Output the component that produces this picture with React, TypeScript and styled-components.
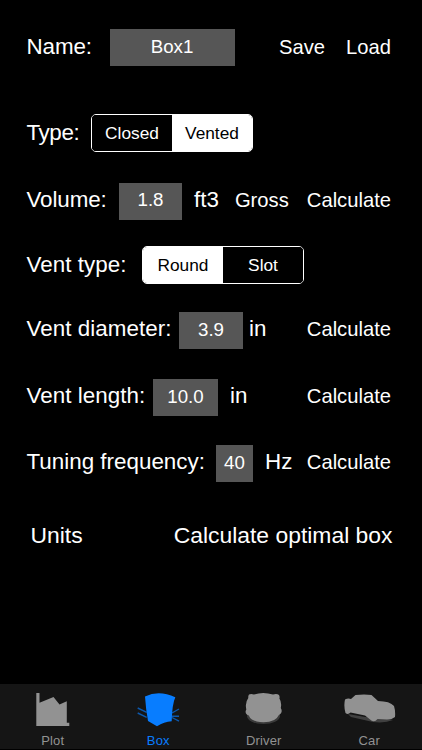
import React, { useState } from "react";
import styled, { createGlobalStyle } from "styled-components";

const GlobalStyle = createGlobalStyle`
  html, body { margin: 0; padding: 0; background: #000; }
  * { box-sizing: border-box; }
`;

const Screen = styled.div`
  width: 422px;
  height: 750px;
  display: flex;
  flex-direction: column;
  background: #000;
  color: #fff;
  font-family: "Liberation Sans", Arial, sans-serif;
  overflow: hidden;
`;

const Form = styled.main`
  flex: 1;
  display: flex;
  flex-direction: column;
  padding: 28px 31px 0 26.5px;
`;

const Row = styled.div<{ $gap: number }>`
  display: flex;
  align-items: center;
  height: 38px;
  margin-bottom: ${(p) => p.$gap}px;
  white-space: nowrap;
`;

const Label = styled.span<{ $width: number; $lift?: number; $track?: number }>`
  width: ${(p) => p.$width}px;
  flex: none;
  font-size: 22.4px;
  line-height: 26px;
  letter-spacing: ${(p) => p.$track ?? 0}px;
  padding-bottom: ${(p) => p.$lift ?? 3}px;
`;

const Field = styled.input<{ $width: number; $lift?: number }>`
  width: ${(p) => p.$width}px;
  height: 37px;
  flex: none;
  border: 0;
  border-radius: 0;
  outline: 0;
  padding: 0 0 ${(p) => p.$lift ?? 1}px;
  background: #565656;
  color: #fff;
  font: 18.7px "Liberation Sans", Arial, sans-serif;
  text-align: center;
`;

const Unit = styled.span<{ $gap: number }>`
  margin-left: ${(p) => p.$gap}px;
  font-size: 22.4px;
  line-height: 26px;
  padding-bottom: 3px;
`;

const Action = styled.button<{ $gap?: number; $size?: number; $lift?: number }>`
  margin: 0 0 0 ${(p) => (p.$gap === undefined ? "auto" : `${p.$gap}px`)};
  border: 0;
  padding: 0 0 ${(p) => p.$lift ?? 2}px;
  background: none;
  color: #fff;
  font-family: inherit;
  font-size: ${(p) => p.$size ?? 20.2}px;
  line-height: 26px;
`;

const WideAction = styled(Action)`
  margin-right: -1.5px;
`;

const Segments = styled.div`
  display: flex;
  width: 162px;
  height: 38px;
  border: 1px solid #fff;
  border-radius: 5px;
  overflow: hidden;
`;

const Segment = styled.button<{ $on: boolean }>`
  flex: 1;
  border: 0;
  padding: 0;
  background: ${(p) => (p.$on ? "#fff" : "#000")};
  color: ${(p) => (p.$on ? "#000" : "#fff")};
  font-family: inherit;
  font-size: 17.3px;
`;

const TabBar = styled.nav`
  height: 66px;
  flex: none;
  display: grid;
  grid-template-columns: repeat(4, 1fr);
  background: #151515;
  border-bottom: 1px solid #000;
`;

const Tab = styled.button<{ $on: boolean }>`
  display: flex;
  flex-direction: column;
  align-items: center;
  border: 0;
  padding: 4px 0 0;
  background: none;
  color: ${(p) => (p.$on ? "#087dff" : "#929292")};
  font-family: inherit;
  font-size: 13px;
  line-height: 17px;
  letter-spacing: 0.15px;
`;

const TabIcon = styled.svg`
  display: block;
  flex: none;
  width: 60px;
  height: 44px;
  fill: currentColor;
  stroke: none;
`;

const SoftShape = styled.g`
  filter: blur(0.5px);
`;

const PlotIcon = () => (
  <TabIcon viewBox="0 0 60 44">
    <path d="M13.3 5h3.2v9.7L30.5 9l6 7.5 7.3-3.2v21.4h2.5V38h-33z" />
  </TabIcon>
);

const BoxIcon = () => (
  <TabIcon viewBox="0 0 60 44">
    <path d="M17 8.5Q31 1.5 47.3 9.3 44.2 16 43.7 33.2 36 33.8 29 38.2L20 33Q17.8 21 17 8.5z" />
    <path
      d="M9.7 20l9 4.3M9.7 25l9 4.3M44 25l7-4M44 28.2h7M44 29.5l7 3.6"
      fill="none"
      stroke="currentColor"
      strokeWidth="1.4"
      opacity="0.65"
    />
  </TabIcon>
);

const DriverIcon = () => (
  <TabIcon viewBox="0 0 60 44">
    <SoftShape>
      <ellipse cx="29.5" cy="28" rx="16.5" ry="8" opacity="0.3" />
      <path d="M15 6.5q2-1 5 0 9-3 19 0 4-1 6 .5 1 2 .4 3.5 2.6 4 1.4 9.5 1.8 3 0 5.5-1.3 1-2.3 2Q42 34 29.5 34.3 17 34 14.8 27.5q-2-.5-2.8-2-1-2 .3-4-1.5-7 2-11.5Q14 8 15 6.5z" />
    </SoftShape>
  </TabIcon>
);

const CarIcon = () => (
  <TabIcon viewBox="0 0 60 44">
    <SoftShape>
      <path d="M9 26l17 3 24 2 4 1q-8 3.5-20 2L12 29z" opacity="0.35" />
      <path d="M6 11.5Q9 10 12 11l4.500-4q9-1 16 0l6.500 6q12 .2 16 5 1.600 5 1 11-3 2.500-8 2.500l-9.500-.5q-3.500 4.500-8 0L26 27.500 11.500 24.500Q9 27 6.500 25 4.500 18 6 11.500z" />
    </SoftShape>
  </TabIcon>
);

const tabs = [
  { name: "Plot", Icon: PlotIcon },
  { name: "Box", Icon: BoxIcon },
  { name: "Driver", Icon: DriverIcon },
  { name: "Car", Icon: CarIcon },
];

function Choice({ options, initial }: { options: string[]; initial: string }) {
  const [value, setValue] = useState(initial);
  return (
    <Segments>
      {options.map((o) => (
        <Segment key={o} $on={o === value} onClick={() => setValue(o)}>
          {o}
        </Segment>
      ))}
    </Segments>
  );
}

export default function App() {
  const [tab, setTab] = useState("Box");
  return (
    <Screen>
      <GlobalStyle />
      <Form>
        <Row $gap={48}>
          <Label $width={83} $lift={0} $track={-0.1}>Name:</Label>
          <Field $width={125} $lift={1} defaultValue="Box1" />
          <Action $lift={0}>Save</Action>
          <Action $gap={21} $lift={0}>Load</Action>
        </Row>
        <Row $gap={30}>
          <Label $width={64.5} $lift={1} $track={-0.4}>Type:</Label>
          <Choice options={["Closed", "Vented"]} initial="Vented" />
        </Row>
        <Row $gap={26}>
          <Label $width={92.5} $track={-0.1}>Volume:</Label>
          <Field $width={63} $lift={2} defaultValue="1.8" />
          <Unit $gap={12}>ft3</Unit>
          <Action $gap={16}>Gross</Action>
          <Action>Calculate</Action>
        </Row>
        <Row $gap={27}>
          <Label $width={115.5} $lift={1} $track={0.05}>Vent type:</Label>
          <Choice options={["Round", "Slot"]} initial="Round" />
        </Row>
        <Row $gap={29}>
          <Label $width={152.5} $lift={2} $track={0.05}>Vent diameter:</Label>
          <Field $width={64} $lift={1} defaultValue="3.9" />
          <Unit $gap={6}>in</Unit>
          <Action $lift={2}>Calculate</Action>
        </Row>
        <Row $gap={28}>
          <Label $width={126.5} $lift={2} $track={0.05}>Vent length:</Label>
          <Field $width={65} $lift={1} defaultValue="10.0" />
          <Unit $gap={12}>in</Unit>
          <Action $lift={2}>Calculate</Action>
        </Row>
        <Row $gap={35}>
          <Label $width={189.5} $lift={2}>Tuning frequency:</Label>
          <Field $width={37} $lift={1} defaultValue="40" />
          <Unit $gap={12}>Hz</Unit>
          <Action $lift={2}>Calculate</Action>
        </Row>
        <Row $gap={0}>
          <Action $gap={4} $size={22.9}>Units</Action>
          <WideAction $size={22.9}>Calculate optimal box</WideAction>
        </Row>
      </Form>
      <TabBar>
        {tabs.map(({ name, Icon }) => (
          <Tab key={name} $on={name === tab} onClick={() => setTab(name)}>
            <Icon />
            {name}
          </Tab>
        ))}
      </TabBar>
    </Screen>
  );
}
